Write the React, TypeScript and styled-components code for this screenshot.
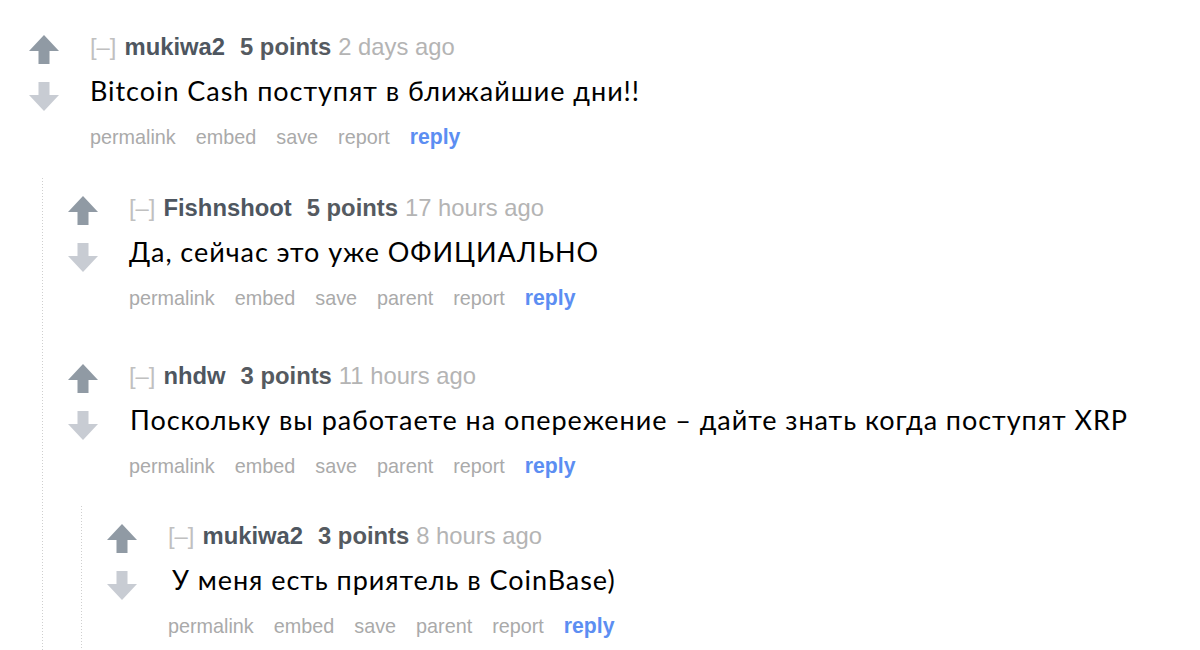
import React, { FC, ReactNode } from 'react';
import styled, { createGlobalStyle } from 'styled-components';

const GlobalStyle = createGlobalStyle`
  body {
    margin: 0;
    background: #fff;
    font-family: "Liberation Sans", Arial, sans-serif;
  }
`;

const Page = styled.div`
  padding: 34px 0 0 29px;
  height: 650px;
  box-sizing: border-box;
  overflow: hidden;
`;

const CommentRow = styled.div`
  display: flex;
  align-items: flex-start;
`;

const Votes = styled.div`
  display: flex;
  flex-direction: column;
  width: 30px;
  margin-right: 31px;
  padding-top: 1px;
  flex-shrink: 0;
`;

const Arrow = styled.svg<{ $down?: boolean }>`
  display: block;
  width: 30px;
  height: 29px;
  margin-top: ${(p) => (p.$down ? '18px' : '0')};
  fill: ${(p) => (p.$down ? '#c8ccd3' : '#909aa4')};
`;

const Entry = styled.div`
  display: flex;
  flex-direction: column;
`;

const Tagline = styled.div`
  font-size: 23.8px;
  line-height: 26px;
  white-space: nowrap;
`;

const Collapse = styled.span`
  color: #c0c0c0;
  margin-right: 8px;
`;

const Author = styled.span`
  color: #4e5660;
  font-weight: 700;
  margin-right: 15px;
`;

const Score = styled.span`
  color: #555a60;
  font-weight: 700;
  margin-right: 7px;
`;

const Time = styled.span`
  color: #b4b4b4;
`;

const Body = styled.div<{ $indent: number }>`
  font-family: Lato, "Noto Sans", sans-serif;
  font-size: 27px;
  letter-spacing: 0.95px;
  line-height: 36px;
  margin-top: 13px;
  padding-left: ${(p) => p.$indent}px;
  color: #000;
  white-space: nowrap;
`;

const Buttons = styled.ul`
  display: flex;
  gap: 20px;
  list-style: none;
  margin: 16px 0 0;
  padding: 0;
  font-size: 19.8px;
  line-height: 24px;
`;

const Button = styled.li<{ $primary?: boolean }>`
  color: ${(p) => (p.$primary ? '#5c8ef2' : '#aaaaaa')};
  font-weight: ${(p) => (p.$primary ? 700 : 400)};
  font-size: ${(p) => (p.$primary ? '21.2px' : 'inherit')};
`;

const Children = styled.div<{ $top: number }>`
  display: flex;
  flex-direction: column;
  gap: 53px;
  margin: ${(p) => p.$top}px 0 0 13px;
  padding: 17px 0 40px 26px;
  background: linear-gradient(#cfcfcf 34%, transparent 34%) left top / 1px 3px repeat-y;
`;

type CommentProps = {
  author: string;
  points: number;
  time: string;
  text: string;
  indent?: number;
  parent?: boolean;
  top?: number;
  children?: ReactNode;
};

const Comment: FC<CommentProps> = ({
  author,
  points,
  time,
  text,
  indent = 0,
  parent,
  top = 29,
  children,
}) => (
  <div>
    <CommentRow>
      <Votes>
        <Arrow viewBox="0 0 30 29">
          <path d="M15 0 L30 16 L20.5 16 L20.5 29 L9.5 29 L9.5 16 L0 16 Z" />
        </Arrow>
        <Arrow $down viewBox="0 0 30 29">
          <path d="M9.5 0 L20.5 0 L20.5 13 L30 13 L15 29 L0 13 L9.5 13 Z" />
        </Arrow>
      </Votes>
      <Entry>
        <Tagline>
          <Collapse>[–]</Collapse>
          <Author>{author}</Author>
          <Score>{points} points</Score>
          <Time>{time}</Time>
        </Tagline>
        <Body $indent={indent}>{text}</Body>
        <Buttons>
          <Button>permalink</Button>
          <Button>embed</Button>
          <Button>save</Button>
          {parent && <Button>parent</Button>}
          <Button>report</Button>
          <Button $primary>reply</Button>
        </Buttons>
      </Entry>
    </CommentRow>
    {children && <Children $top={top}>{children}</Children>}
  </div>
);

export default function App() {
  return (
    <>
      <GlobalStyle />
      <Page>
        <Comment
          author="mukiwa2"
          points={5}
          time="2 days ago"
          text="Bitcoin Cash поступят в ближайшие дни!!"
        >
          <Comment
            author="Fishnshoot"
            points={5}
            time="17 hours ago"
            text="Да, сейчас это уже ОФИЦИАЛЬНО"
            parent
          />
          <Comment
            author="nhdw"
            points={3}
            time="11 hours ago"
            text="Поскольку вы работаете на опережение – дайте знать когда поступят XRP"
            indent={1}
            parent
            top={28}
          >
            <Comment
              author="mukiwa2"
              points={3}
              time="8 hours ago"
              text="У меня есть приятель в CoinBase)"
              indent={4}
              parent
            />
          </Comment>
        </Comment>
      </Page>
    </>
  );
}
